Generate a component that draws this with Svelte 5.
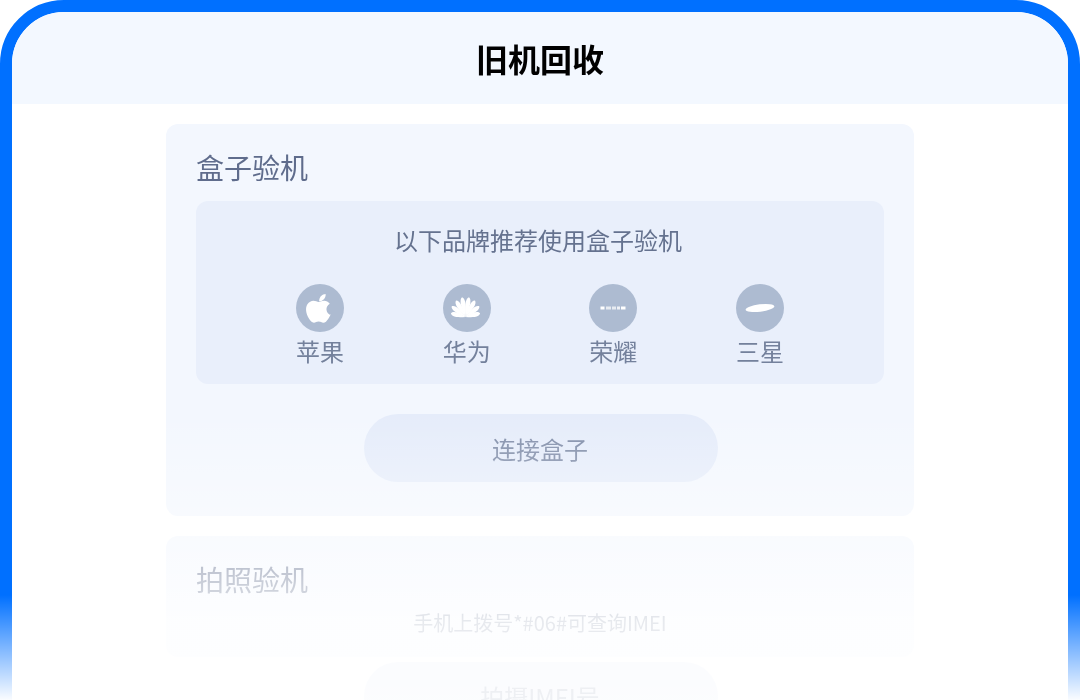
<script>
  const brands = [
    { name: '苹果', key: 'apple' },
    { name: '华为', key: 'huawei' },
    { name: '荣耀', key: 'honor' },
    { name: '三星', key: 'samsung' }
  ];
  // fan of the Huawei mark: angle and length of each petal from the hub
  const petals = [
    { a: -10, l: 20 },
    { a: 10, l: 20 },
    { a: -30, l: 19 },
    { a: 30, l: 19 },
    { a: -52, l: 17.5 },
    { a: 52, l: 17.5 },
    { a: -76, l: 15 },
    { a: 76, l: 15 }
  ];
  const petalPath = (l) =>
    `M0 0C-2.6 ${-l * 0.5} -3.6 ${-l * 0.9} 0 ${-l}C3.6 ${-l * 0.9} 2.6 ${-l * 0.5} 0 0Z`;
</script>

<div class="screen">
  <div class="frame">
    <header class="topbar">旧机回收</header>

    <main class="body">
      <section class="card">
        <h2>盒子验机</h2>
        <div class="panel">
          <p class="hint">以下品牌推荐使用盒子验机</p>
          <ul class="brands">
            {#each brands as b}
              <li>
                <span class="logo">
                  <svg viewBox="0 0 48 48" width="48" height="48">
                    {#if b.key === 'apple'}
                      <g fill="#fff" transform="translate(24.5 24) scale(1.12) translate(-24 -24)">
                        <path d="M28.6 11.4c.2 2-.6 3.6-1.6 4.7-1.1 1.2-2.6 2-4.2 1.9-.2-1.8.6-3.5 1.6-4.6 1.1-1.2 2.8-2 4.2-2z" />
                        <path d="M33.2 29.4c-.8 1.8-1.2 2.6-2.2 4.1-1.4 2.1-2.8 3.6-4.5 3.6-1.6 0-2.2-1-4.2-1s-2.6 1-4.2 1c-1.8 0-3.1-1.6-4.3-3.4-3-4.6-3.5-10-1.5-13 1.4-2.1 3.4-3.2 5.4-3.2 2 0 3.3 1.1 4.8 1.1s2.5-1.1 4.8-1.1c1.8 0 3.7 1 5 2.7-4.4 2.4-3.7 8.7.9 10.2z" />
                      </g>
                    {:else if b.key === 'huawei'}
                      <g fill="#fff">
                        {#each petals as p}
                          <path d={petalPath(p.l)} transform="translate(22.5 33) rotate({p.a})" />
                        {/each}
                      </g>
                    {:else if b.key === 'honor'}
                      <g fill="#fff">
                        <rect x="11.5" y="22.5" width="4" height="3" />
                        <rect x="17" y="22.5" width="5" height="3" opacity="0.7" />
                        <rect x="23" y="22.5" width="4" height="3" opacity="0.7" />
                        <rect x="28" y="22.5" width="3" height="3" opacity="0.8" />
                        <rect x="32" y="22.5" width="4.5" height="3" />
                      </g>
                    {:else}
                      <ellipse cx="24" cy="24" rx="14.5" ry="3.7" fill="#fff" transform="rotate(-7 24 24)" />
                    {/if}
                  </svg>
                </span>
                <span class="brand-name">{b.name}</span>
              </li>
            {/each}
          </ul>
        </div>
        <button class="pill">连接盒子</button>
      </section>

      <section class="card second">
        <h2>拍照验机</h2>
        <p class="note">手机上拨号*#06#可查询IMEI</p>
      </section>
      <button class="pill after-card">拍摄IMEI号</button>
    </main>

    <div class="content-fade"></div>
  </div>
  <div class="edge-fade left"></div>
  <div class="edge-fade right"></div>
</div>

<style>
  :global(body) {
    margin: 0;
    background: #fff;
  }

  .screen {
    position: relative;
    width: 1080px;
    height: 700px;
    overflow: hidden;
    font-family: "Noto Sans CJK SC", "Noto Sans", sans-serif;
    filter: blur(0.6px);
  }

  .frame {
    position: relative;
    box-sizing: border-box;
    height: 900px;
    border: 12px solid #0070ff;
    border-radius: 64px;
    background: #fff;
    overflow: hidden;
  }

  .topbar {
    height: 92px;
    display: flex;
    align-items: center;
    justify-content: center;
    background: #f3f8ff;
    color: #000;
    font-size: 32px;
    font-weight: 700;
  }

  .body {
    display: flex;
    flex-direction: column;
    align-items: center;
    gap: 20px;
    padding-top: 20px;
  }

  .card {
    box-sizing: border-box;
    width: 748px;
    padding: 26px 30px 34px;
    background: #f3f7fe;
    border-radius: 12px;
    display: flex;
    flex-direction: column;
  }

  .second {
    padding-bottom: 20px;
  }

  h2 {
    margin: 0;
    font-size: 28px;
    font-weight: 400;
    line-height: 34px;
    color: #5f6c8c;
  }

  .panel {
    margin-top: 17px;
    padding: 22px 0 16px;
    background: #e9effb;
    border-radius: 12px;
  }

  .hint {
    margin: 0;
    padding-right: 4px;
    font-size: 24px;
    line-height: 34px;
    text-align: center;
    color: #65728f;
  }

  .brands {
    list-style: none;
    margin: 27px 0 0;
    padding: 0;
    display: grid;
    grid-template-columns: repeat(4, 146.67px);
    justify-content: center;
  }

  .brands li {
    display: flex;
    flex-direction: column;
    align-items: center;
    gap: 2px;
  }

  .logo {
    width: 48px;
    height: 48px;
    border-radius: 50%;
    background: #adbbd1;
    display: block;
  }

  .logo svg {
    display: block;
  }

  .brand-name {
    font-size: 24px;
    line-height: 34px;
    color: #74819c;
  }

  .pill {
    align-self: center;
    width: 354px;
    height: 68px;
    margin: 30px 0 0 2px;
    padding: 0 2px 0 0;
    border: 0;
    border-radius: 34px;
    background: #e5ecfa;
    color: #7f8ca8;
    font-family: inherit;
    font-size: 24px;
  }

  .after-card {
    margin-top: -15px;
  }

  .note {
    margin: 13px 0 0;
    font-size: 20px;
    line-height: 28px;
    text-align: center;
    color: #6c7a97;
  }

  /* content melts into white towards the bottom, the blue edge fades later */
  .content-fade {
    position: absolute;
    left: 0;
    right: 0;
    top: 0;
    height: 700px;
    pointer-events: none;
    background: linear-gradient(
      to bottom,
      rgba(255, 255, 255, 0) 400px,
      rgba(255, 255, 255, 0.35) 488px,
      rgba(255, 255, 255, 0.6) 556px,
      rgba(255, 255, 255, 0.84) 610px,
      rgba(255, 255, 255, 0.87) 688px
    );
  }

  .edge-fade {
    position: absolute;
    top: 595px;
    width: 12px;
    height: 105px;
    pointer-events: none;
    background: linear-gradient(to bottom, rgba(255, 255, 255, 0), rgba(255, 255, 255, 0.98));
  }

  .edge-fade.left {
    left: 0;
  }

  .edge-fade.right {
    right: 0;
  }
</style>
